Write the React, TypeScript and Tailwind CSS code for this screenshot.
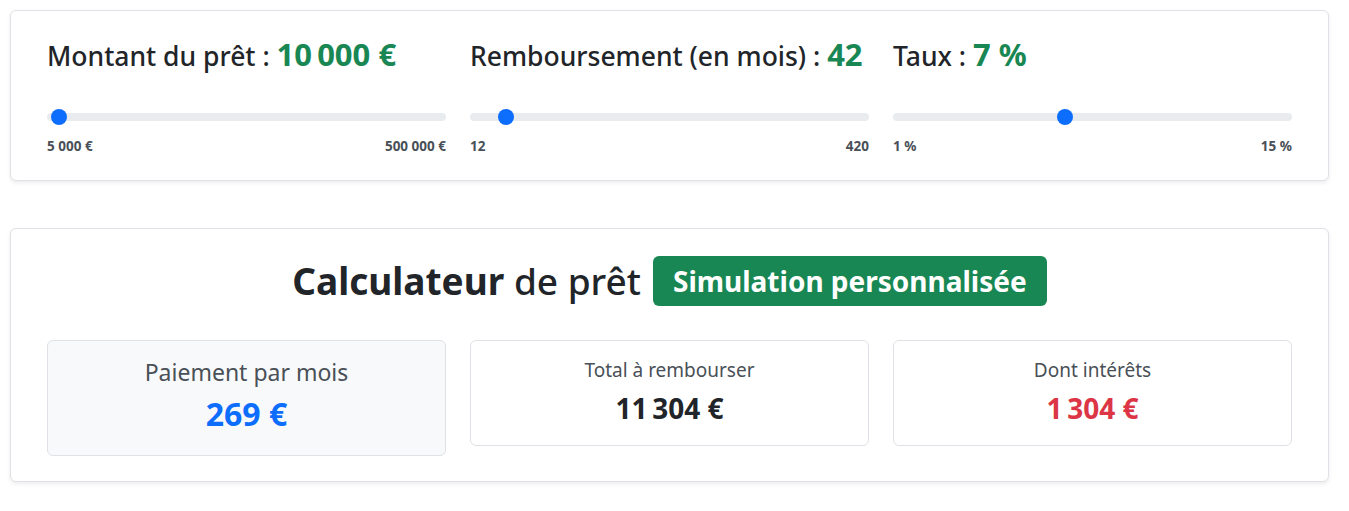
import React from "react";

const sliders = [
  { label: "Montant du prêt", value: "10\u202F000 €", min: "5 000 €", max: "500 000 €", pct: 0.0101 },
  { label: "Remboursement (en mois)", value: "42", min: "12", max: "420", pct: 0.0735 },
  { label: "Taux", value: "7 %", min: "1 %", max: "15 %", pct: 0.4286 },
];

function Slider({ pct }: { pct: number }) {
  return (
    <div className="relative h-4 flex items-center">
      <div className="w-full h-2 rounded-full bg-[#e9ecef]" />
      <div
        className="absolute top-0 w-4 h-4 rounded-full bg-[#0d6efd]"
        style={{ left: `calc(${pct} * (100% - 16px))` }}
      />
    </div>
  );
}

export default function App() {
  return (
    <div
      className="bg-white min-h-[511px] pt-[10px] pl-[10px] text-[#212529]"
      style={{ fontFamily: '"Noto Sans", "Open Sans", sans-serif' }}
    >
      {/* ================= SLIDERS ================= */}
      <div className="w-[1319px] border border-[#dee2e6] rounded-md shadow-[0_2px_4px_rgba(0,0,0,0.075)] bg-white px-[36px] pt-[28px] pb-[26px]">
        <div className="grid grid-cols-3 gap-[24px]">
          {sliders.map((s) => (
            <div key={s.label}>
              <h3 className="h-[34px] text-[26.5px] leading-[34px] font-medium whitespace-nowrap">
                {s.label} : <span className="text-[31px] leading-none font-bold text-[#198754]">{s.value}</span>
              </h3>
              <div className="mt-[36px]">
                <Slider pct={s.pct} />
              </div>
              <div className="mt-[13px] flex justify-between text-[13.5px] leading-[16px] font-bold text-[#495057]">
                <span>{s.min}</span>
                <span>{s.max}</span>
              </div>
            </div>
          ))}
        </div>
      </div>

      {/* ================= CALCULATOR ================= */}
      <div className="mt-[47px] w-[1319px] border border-[#dee2e6] rounded-md shadow-[0_2px_4px_rgba(0,0,0,0.075)] bg-white px-[36px] pt-[27px] pb-[25px]">
        <div className="flex items-center justify-center gap-[12px]">
          <h1 className="text-[37px] leading-[48px] font-medium">
            <span className="font-bold">Calculateur</span> de prêt
          </h1>
          <span className="h-[50px] px-[20px] flex items-center rounded-md bg-[#198754] text-white text-[28px] font-bold">
            Simulation personnalisée
          </span>
        </div>

        <div className="mt-[34px] grid grid-cols-3 gap-[24px] items-start">
          <div className="h-[116px] border border-[#dee2e6] rounded-md bg-[#f8f9fa] flex flex-col items-center pt-[16px]">
            <div className="text-[23px] leading-[30px] text-[#495057]">Paiement par mois</div>
            <div className="mt-[8px] text-[32px] leading-[38px] font-bold text-[#0d6efd]">269 €</div>
          </div>
          <div className="h-[106px] border border-[#dee2e6] rounded-md bg-white flex flex-col items-center pt-[17px]">
            <div className="text-[19px] leading-[24px] text-[#495057]">Total à rembourser</div>
            <div className="mt-[9px] text-[28px] leading-[34px] font-bold">11&#8239;304 €</div>
          </div>
          <div className="h-[106px] border border-[#dee2e6] rounded-md bg-white flex flex-col items-center pt-[17px]">
            <div className="text-[19px] leading-[24px] text-[#495057]">Dont intérêts</div>
            <div className="mt-[9px] text-[28px] leading-[34px] font-bold text-[#dc3545]">1&#8239;304 €</div>
          </div>
        </div>
      </div>
    </div>
  );
}
